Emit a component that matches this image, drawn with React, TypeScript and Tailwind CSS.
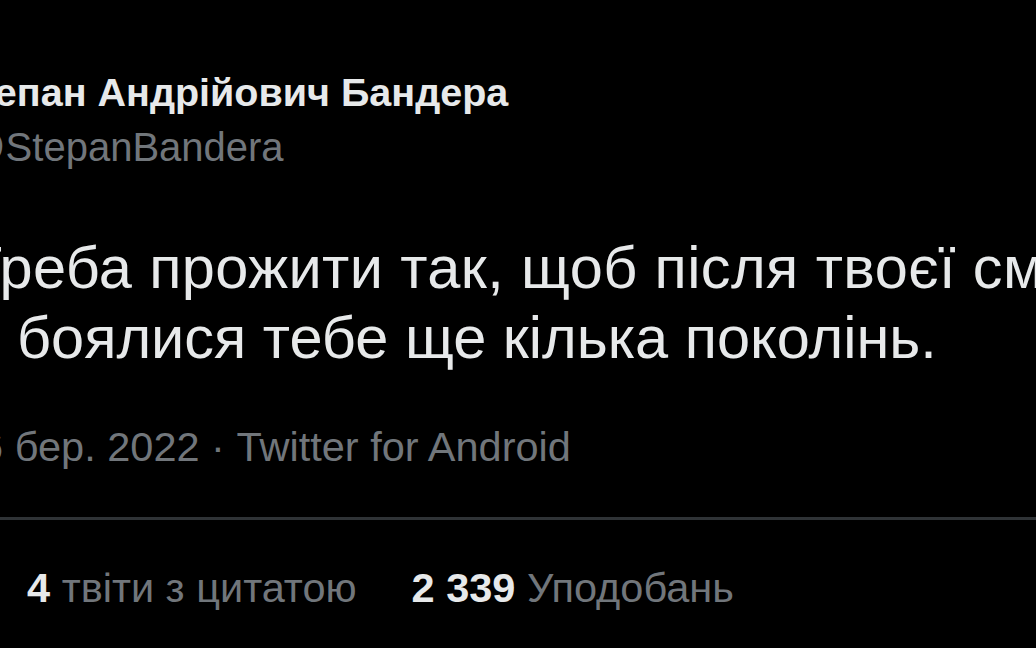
import React from 'react';

const stats = [
  { count: '4', label: 'твіти з цитатою' },
  { count: '2 339', label: 'Уподобань' },
];

export default function App() {
  return (
    <div className="w-[1036px] h-[648px] bg-black overflow-hidden font-['Liberation_Sans',Arial,sans-serif] whitespace-nowrap">
      <div className="flex flex-col pt-[68px]">
        {/* author */}
        <div className="ml-[-53px] text-[39.5px] leading-[48px] font-bold text-[#e7e9ea]">
          Степан Андрійович Бандера
        </div>
        <div className="ml-[-35px] mt-[7px] text-[40px] leading-[48px] text-[#71767b]">
          @StepanBandera
        </div>

        {/* tweet body */}
        <div className="mt-[62px] text-[59.5px] leading-[70px] text-[#e7e9ea]">
          <div className="ml-[-34px] tracking-[0.4px]">Треба прожити так, щоб після твоєї смерті</div>
          <div className="ml-[17px]">боялися тебе ще кілька поколінь.</div>
        </div>

        {/* meta */}
        <div className="ml-[-43px] mt-[50px] text-[41.5px] leading-[48px] text-[#71767b]">
          16 бер. 2022 · Twitter for Android
        </div>

        <div className="mt-[46px] h-[3px] bg-[#2f3336]" />

        {/* stats */}
        <div className="flex gap-[55px] pl-[27px] mt-[44px] text-[41.5px] leading-[48px]">
          {stats.map((s) => (
            <div key={s.label}>
              <span className="font-bold text-[#e7e9ea]">{s.count}</span>{' '}
              <span className="text-[#71767b]">{s.label}</span>
            </div>
          ))}
        </div>
      </div>
    </div>
  );
}
